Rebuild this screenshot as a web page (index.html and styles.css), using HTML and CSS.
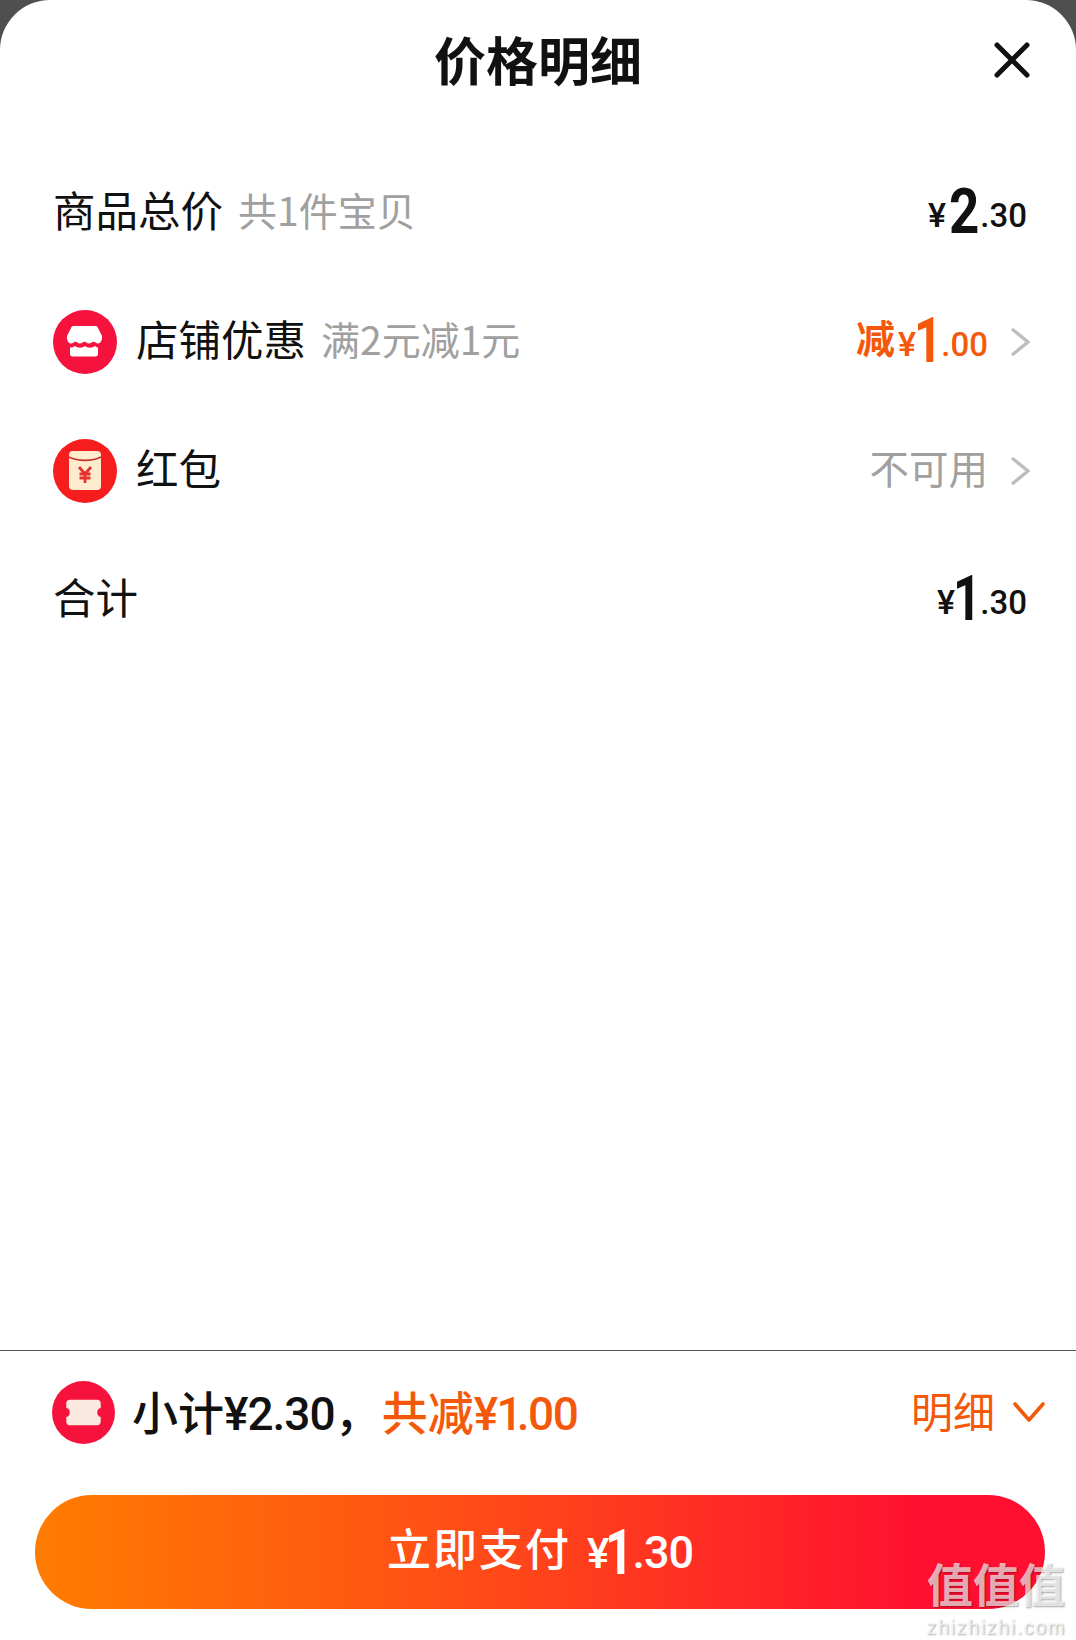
FILE: index.html
```html
<!DOCTYPE html>
<html lang="zh-CN">
<head>
<meta charset="utf-8">
<title>价格明细</title>
<link rel="stylesheet" href="styles.css">
</head>
<body>
<main class="sheet">
  <header class="head">
    <span></span>
    <h1 class="title">价格明细</h1>
    <svg class="close" viewBox="0 0 36 36" width="36" height="36"><path d="M3 3 33 33M33 3 3 33" fill="none" stroke="#111" stroke-width="5" stroke-linecap="round"/></svg>
  </header>

  <section class="rows">
    <div class="row">
      <div class="label"><span class="lift">商品总价</span><span class="note lift">共1件宝贝</span></div>
      <div class="value"><span class="price"><i class="cur">¥</i><b class="int">2</b><i class="dec">.30</i></span></div>
    </div>
    <div class="row">
      <div class="label">
        <svg class="badge" viewBox="0 0 64 64" width="64" height="64"><circle cx="32" cy="32" r="32" fill="#f5123d"/><path d="M21 16h21c1.500 0 2.500.6 3 2l4 8c.5 4-1.500 7.500-4 7.500-2 0-3-1.700-4.500-1.700s-2.500 1.700-4.500 1.700-3-1.700-4.500-1.700-2.500 1.700-4.500 1.700-3-1.700-4.500-1.700-2.500 1.700-4.500 1.700c-2.500 0-4.500-3.500-4-7.500l4-8c.5-1.400 1.500-2 3-2Z" fill="#fff"/><path d="M17 37.500c2 .4 3.500-.6 5-1.500 1.500 1 3 1.700 5 1.700s3.500-.7 5-1.700c1.500 1 3 1.700 5 1.700s3.500-.7 5-1.700c1 .9 2 1.500 3 1.500v6.500c0 1.600-1 2.500-2.500 2.500h-23c-1.500 0-2.500-.9-2.500-2.500Z" fill="#fff"/></svg>
        <span class="lift">店铺优惠</span><span class="note lift">满2元减1元</span>
      </div>
      <div class="value value-link">
        <span class="price orange"><strong class="cut">减</strong><i class="cur">¥</i><b class="int int-one">1</b><i class="dec">.00</i></span>
        <svg class="chev" viewBox="0 0 20 30" width="20" height="30"><path d="M2 2 18 15 2 28" fill="none" stroke="#bdbdbd" stroke-width="3.400"/></svg>
      </div>
    </div>
    <div class="row">
      <div class="label">
        <svg class="badge" viewBox="0 0 64 64" width="64" height="64"><circle cx="32" cy="32" r="32" fill="#f61d1f"/><rect x="16" y="12" width="32" height="39" rx="4" fill="#fdeccd"/><path d="M16 18c9 4.500 23 4.500 32 0" fill="none" stroke="#c9302c" stroke-width="1.600"/><path d="M26 28l6 7 6-7M32 35v9M26.500 35h11M26.500 39h11" fill="none" stroke="#e5322e" stroke-width="2.800"/></svg>
        <span class="lift">红包</span>
      </div>
      <div class="value value-link">
        <span class="muted lift">不可用</span>
        <svg class="chev" viewBox="0 0 20 30" width="20" height="30"><path d="M2 2 18 15 2 28" fill="none" stroke="#bdbdbd" stroke-width="3.400"/></svg>
      </div>
    </div>
    <div class="row">
      <div class="label"><span class="lift">合计</span></div>
      <div class="value"><span class="price"><i class="cur">¥</i><b class="int int-one">1</b><i class="dec">.30</i></span></div>
    </div>
  </section>

  <footer class="foot">
    <div class="summary">
      <div class="sum-left">
        <svg class="badge" viewBox="0 0 64 64" width="64" height="64"><circle cx="32" cy="32" r="32" fill="#f5123d"/><path d="M18 19h28c2 0 3.500 1.500 3.500 3.500v5c-2.500.4-3.500 2.200-3.500 4.500s1 4.100 3.500 4.500v5c0 2-1.500 3.500-3.500 3.500H18c-2 0-3.500-1.500-3.500-3.500v-5c2.500-.4 3.500-2.200 3.500-4.500s-1-4.100-3.500-4.500v-5c0-2 1.500-3.500 3.500-3.500Z" fill="#fbe9df"/></svg>
        <span class="sum-text">小计<span class="num">¥2.30</span>，</span><span class="sum-text sum-cut orange">共减<span class="num num-tight">¥<span class="one">1</span>.00</span></span>
      </div>
      <div class="detail">
        <span class="lift-small">明细</span>
        <svg viewBox="0 0 32 22" width="32" height="22"><path d="M2 3 16 19 30 3" fill="none" stroke="#f4590b" stroke-width="3.600" stroke-linecap="round" stroke-linejoin="round"/></svg>
      </div>
    </div>
    <button class="pay"><span class="pay-label">立即支付</span><span class="pay-price"><i class="cur">¥</i><b class="int int-one">1</b><i class="dec">.30</i></span></button>
  </footer>

  <div class="mark"><div class="mark-cn">值值值</div><div class="mark-en">zhizhizhi.com</div></div>
</main>
</body>
</html>
```
FILE: styles.css
```css
* { box-sizing: border-box; }
html, body { margin: 0; padding: 0; }
body {
  width: 1076px;
  height: 1640px;
  overflow: hidden;
  background: #4f4f4f;
  font-family: "Noto Sans CJK SC", "Noto Sans", sans-serif;
  color: #111;
}
.sheet {
  position: relative;
  display: flex;
  flex-direction: column;
  height: 1640px;
  background: #fff;
  border-radius: 50px 50px 0 0;
}
.head {
  display: grid;
  grid-template-columns: 1fr auto 1fr;
  align-items: center;
  height: 148px;
  padding: 0 46px 24px;
}
.title { margin: 0 0 6px; font-size: 52px; line-height: 116px; font-weight: 700; }
.close { justify-self: end; margin-top: -4px; }

.rows { display: flex; flex-direction: column; }
.row {
  display: flex;
  align-items: center;
  justify-content: space-between;
  height: 129px;
  padding: 0 46px 0 53px;
}
.lift { padding-bottom: 8px; }
.lift-small { padding-bottom: 4px; }
.label { display: flex; align-items: center; font-size: 42.500px; line-height: 56px; }
.badge { flex: none; margin-right: 19px; }
.note { margin-left: 15px; font-size: 39px; color: #a0a0a0; }
.value { display: flex; align-items: center; padding-right: 3px; }
.value-link { gap: 22px; padding-right: 0; }
.muted { font-size: 39.500px; line-height: 56px; color: #a0a0a0; }

.price, .pay-price {
  display: inline-flex;
  align-items: baseline;
  padding-bottom: 4px;
  font-family: "Roboto", sans-serif;
  line-height: 56px;
}
.price i, .pay-price i { font-style: normal; }
.cur { font-size: 34px; font-weight: 500; margin-right: 1px; }
.int {
  display: inline-block;
  font-size: 63px;
  font-weight: 700;
  margin: 0 -2px 0 -1px;
  transform: translateY(6px) scaleX(.84);
}
.int-one { margin: 0 -5px 0 -7px; transform: translateY(6px) scaleX(.78); }
.dec { font-size: 33px; font-weight: 500; }
.orange { color: #f4590b; }
.cut { font-family: "Noto Sans CJK SC", sans-serif; font-size: 39px; font-weight: 700; margin-right: 3px; transform: translateY(-3px); }

.foot { margin-top: auto; border-top: 1px solid #555; padding: 29px 31px 31px 35px; }
.summary { display: flex; align-items: center; justify-content: space-between; height: 64px; margin-bottom: 51px; padding-left: 17px; }
.sum-left { display: flex; align-items: center; }
.sum-left .badge { width: 63px; height: 63px; margin-right: 17px; }
.sum-text { font-size: 46px; line-height: 60px; font-weight: 500; white-space: pre; }
.sum-cut { margin-left: 1px; }
.num { font-family: "Roboto", sans-serif; letter-spacing: -1px; }
.num-tight { letter-spacing: -1.500px; }
.one { letter-spacing: -12px; margin-right: 6px; }
.detail { display: flex; align-items: center; gap: 18px; font-size: 42px; line-height: 56px; color: #f4590b; }
.pay {
  display: flex;
  align-items: center;
  justify-content: center;
  gap: 16px;
  width: 100%;
  height: 114px;
  padding: 0;
  border: 0;
  border-radius: 57px;
  color: #fff;
  background: linear-gradient(90deg, #ff7c00 0%, #ff4a18 45%, #ff1030 88%, #ff1030 100%);
  font-family: inherit;
}
.pay-label { padding-bottom: 10px; font-size: 44px; font-weight: 500; letter-spacing: 2px; }
.pay-price .cur { font-size: 42px; letter-spacing: -2px; }
.pay-price .dec { font-size: 45px; letter-spacing: -1px; }

.mark {
  position: absolute;
  right: 7px;
  bottom: 2px;
  width: 146px;
  text-align: center;
  color: rgba(255, 255, 255, .68);
  text-shadow: 1px 1px 2px rgba(0, 0, 0, .35);
}
.mark-cn { font-size: 46px; line-height: 67px; font-weight: 700; white-space: nowrap; }
.mark-en { font-family: "Liberation Sans", sans-serif; font-size: 20px; line-height: 22px; letter-spacing: 1.500px; }
```
